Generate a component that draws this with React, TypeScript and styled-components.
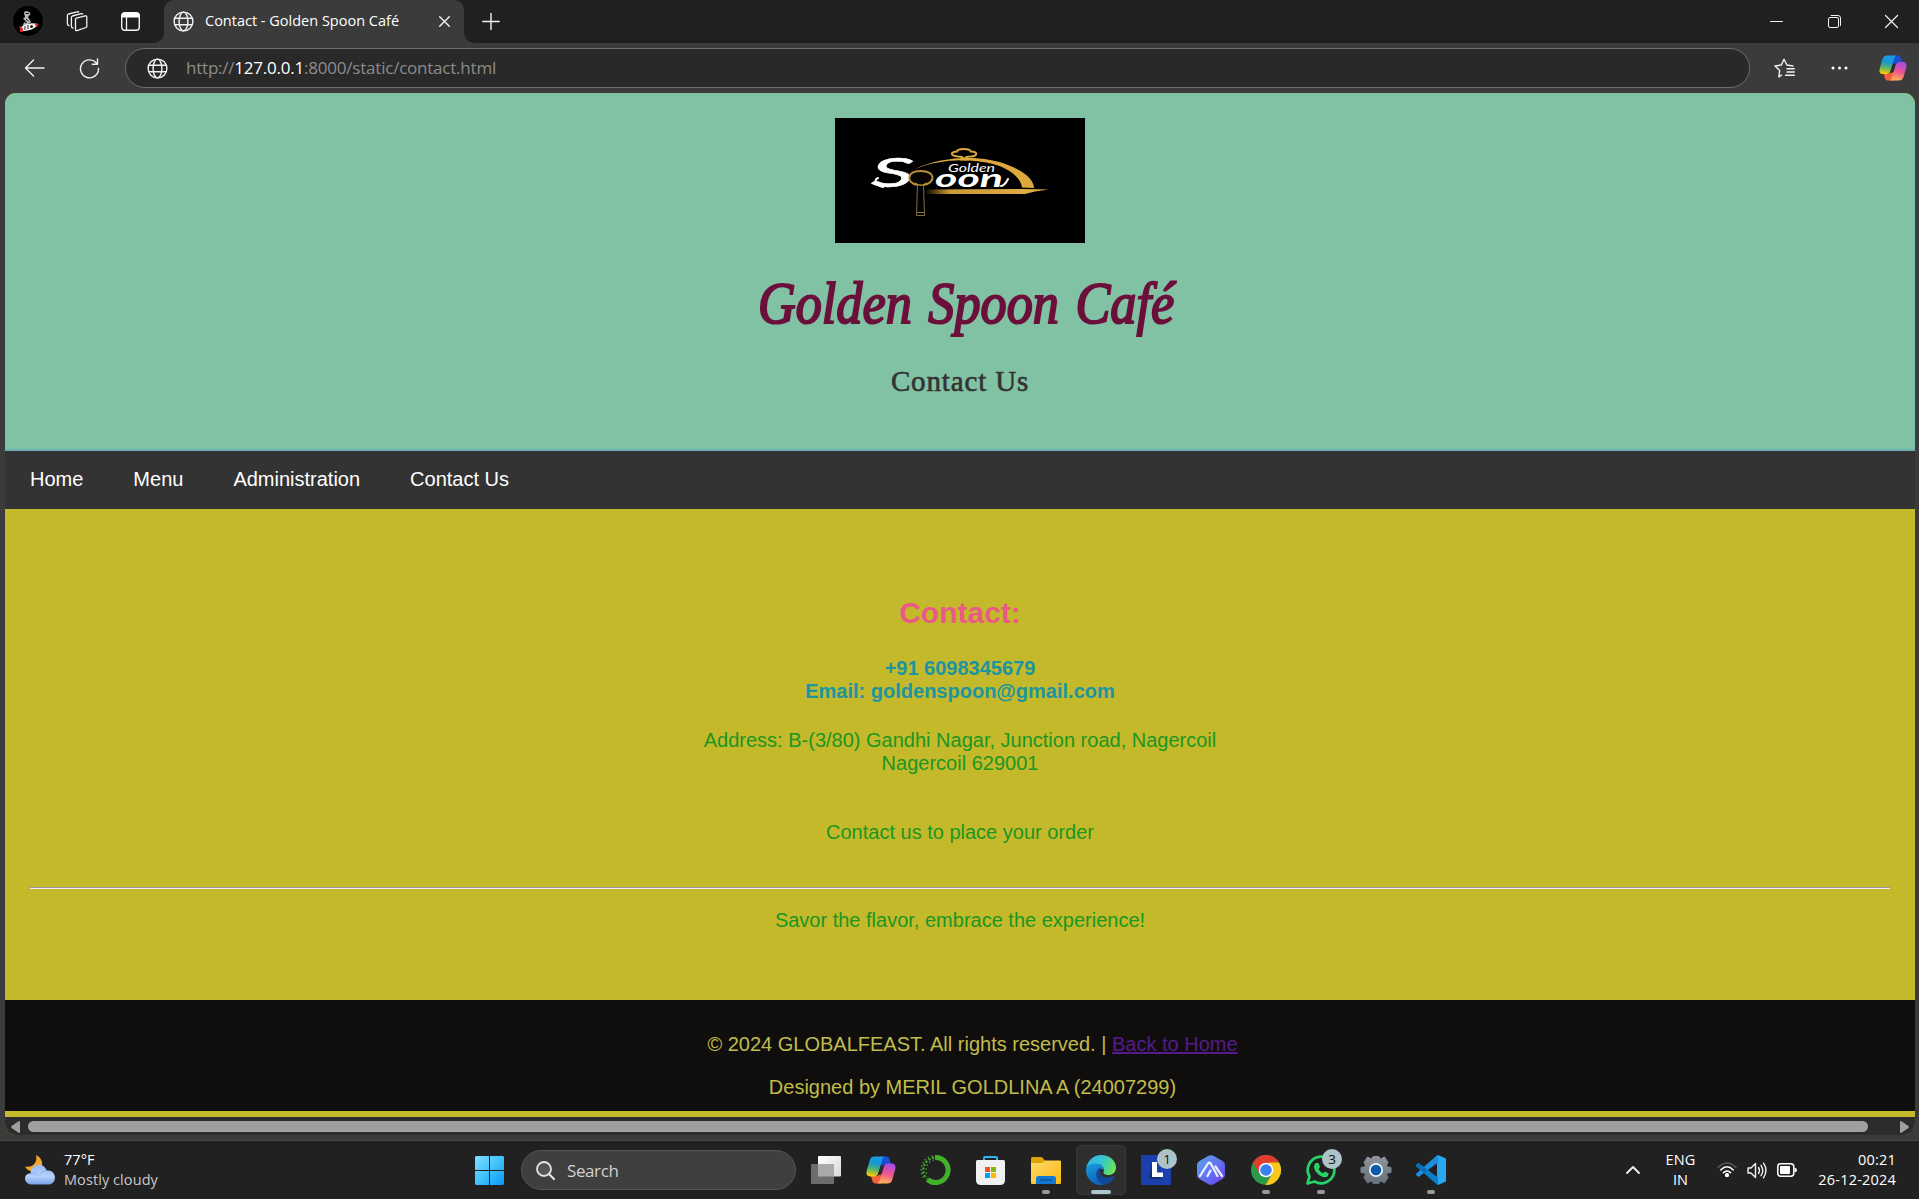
import React from "react";
import styled, { createGlobalStyle } from "styled-components";

const GlobalStyle = createGlobalStyle`
  * { box-sizing: border-box; }
  html, body { margin: 0; padding: 0; overflow: hidden; background: #202020; }
  svg { display: block; flex: none; overflow: visible; }
`;

const ui = `"Open Sans", "Noto Sans", sans-serif`;

const Screen = styled.div`
  width: 1919px;
  height: 1199px;
  display: flex;
  flex-direction: column;
  overflow: hidden;
  font-family: ${ui};
  color: #fff;
`;

const BrowserWindow = styled.div`
  height: 1141px;
  display: flex;
  flex-direction: column;
  background: #3b3b3b;
  border-bottom: 1px solid #474747;
`;

/* ---------- tab strip ---------- */
const TabStrip = styled.div`
  height: 43px;
  flex: none;
  display: flex;
  background: #202020;
`;
const StripIcons = styled.div`
  width: 164px;
  display: flex;
  align-items: center;
  padding: 0 0 1px 13px;
`;
const Cell = styled.div<{ $ml?: number; $mt?: number }>`
  margin-left: ${(p) => p.$ml ?? 0}px;
  margin-top: ${(p) => p.$mt ?? 0}px;
  display: flex;
`;
const Tab = styled.div`
  position: relative;
  width: 300px;
  height: 43px;
  display: flex;
  align-items: center;
  padding: 0 14px 0 9px;
  background: #3b3b3b;
  border-radius: 10px 10px 0 0;
  &::before,
  &::after {
    content: "";
    position: absolute;
    bottom: 0;
    width: 10px;
    height: 10px;
  }
  &::before {
    left: -10px;
    background: radial-gradient(circle at 0 0, transparent 9.5px, #3b3b3b 10px);
  }
  &::after {
    right: -10px;
    background: radial-gradient(circle at 100% 0, transparent 9.5px, #3b3b3b 10px);
  }
`;
const TabTitle = styled.span`
  margin-left: 11px;
  flex: 1;
  font-size: 14.5px;
  letter-spacing: 0;
  line-height: 20px;
  white-space: nowrap;
  padding-bottom: 1px;
`;
const WindowButtons = styled.div`
  margin-left: auto;
  display: flex;
  align-items: center;
  gap: 44.5px;
  padding-right: 21px;
`;

/* ---------- toolbar ---------- */
const Toolbar = styled.div`
  height: 50px;
  flex: none;
  display: flex;
  align-items: center;
  padding-left: 24px;
`;
const AddressBar = styled.div`
  margin-left: 25px;
  width: 1625px;
  height: 40px;
  display: flex;
  align-items: center;
  padding-left: 21px;
  border: 1px solid #6b6b6b;
  border-radius: 20px;
  background: #292929;
`;
const Url = styled.span`
  margin-left: 18px;
  font-size: 17px;
  letter-spacing: -0.22px;
  line-height: 24px;
  color: #8c8c8c;
  white-space: nowrap;
  b { font-weight: 400; color: #fff; }
`;

/* ---------- page ---------- */
const Viewport = styled.div`
  margin: 0 4px 0 5px;
  height: 1042px;
  display: flex;
  flex-direction: column;
  overflow: hidden;
  border-radius: 11px;
  background: #c4b92a;
  font-family: "Liberation Sans", Arial, sans-serif;
  font-size: 20px;
  line-height: 23px;
`;
const Header = styled.header`
  height: 358px;
  flex: none;
  display: flex;
  flex-direction: column;
  align-items: center;
  padding-top: 25px;
  background: #81c2a4;
  border-bottom: 2px solid #6cb0b8;
  font-family: "Liberation Serif", "Times New Roman", serif;
`;
const LogoBox = styled.div`
  width: 250px;
  height: 125px;
  background: #000;
`;
const SiteTitle = styled.h1`
  margin: 24px 0 0 12px;
  font-size: 59px;
  line-height: 72px;
  font-weight: 400;
  font-style: italic;
  color: #6b0f3b;
  -webkit-text-stroke: 2.1px #6b0f3b;
  word-spacing: 4px;
  transform: scaleX(0.885);
  white-space: nowrap;
`;
const SubTitle = styled.p`
  margin: 24px 0 0;
  font-size: 29px;
  line-height: 36px;
  letter-spacing: 0.85px;
  color: #333;
  -webkit-text-stroke: 0.6px #333;
`;
const Nav = styled.nav`
  height: 58px;
  flex: none;
  display: flex;
  align-items: center;
  gap: 50px;
  padding: 0 25px 1px;
  background: #333;
`;
const NavLink = styled.a`
  color: #fff;
`;
const Main = styled.main`
  height: 491px;
  flex: none;
  padding: 87px 25px 0;
  text-align: center;
  color: #1a9622;
`;
const ContactHeading = styled.h2`
  margin: 0;
  font-size: 30px;
  line-height: 34px;
  color: #e95a85;
`;
const Para = styled.p<{ $top: number; $strong?: boolean }>`
  margin: ${(p) => p.$top}px 0 0;
  ${(p) => p.$strong && "font-weight: 700; color: #1b95a0;"}
`;
const Rule = styled.hr`
  margin: 43px 0 0;
  height: 2px;
  border: 0;
  border-top: 1px solid #9a9a9a;
  background: #eee;
`;
const Footer = styled.footer`
  height: 111px;
  flex: none;
  padding: 33px 0 0 25px;
  text-align: center;
  background: #100e0c;
  color: #c0bc4c;
  p { margin: 0 0 20px; }
  a { color: #551a8b; text-decoration: underline; }
`;
const ScrollBar = styled.div`
  margin-top: 6px;
  height: 18px;
  flex: none;
  display: flex;
  align-items: center;
  padding: 1px 6px 0 6px;
  background: #2c2c2c;
`;
const Thumb = styled.div`
  margin: 0 32px 0 8px;
  flex: 1;
  height: 11px;
  border-radius: 6px;
  background: #9f9f9f;
`;

/* ---------- taskbar ---------- */
const Taskbar = styled.div`
  height: 58px;
  display: flex;
  align-items: center;
  background: #212121;
`;
const Weather = styled.div`
  width: 465px;
  display: flex;
  align-items: center;
  padding-left: 24px;
  gap: 8px;
`;
const Lines = styled.div<{ $align?: string; $muted?: boolean; $ls?: number }>`
  display: flex;
  flex-direction: column;
  text-align: ${(p) => p.$align ?? "left"};
  font-size: 14.5px;
  line-height: 20px;
  letter-spacing: ${(p) => p.$ls ?? 0.08}px;
  white-space: nowrap;
  padding-bottom: 1px;
  span:last-child { color: ${(p) => (p.$muted ? "#c8c8c8" : "#fff")}; }
`;
const AppTile = styled.div<{ $active?: boolean }>`
  position: relative;
  width: 50px;
  height: 50px;
  display: flex;
  align-items: center;
  justify-content: center;
  border-radius: 5px;
  border: 1px solid ${(p) => (p.$active ? "#393939" : "transparent")};
  background: ${(p) => (p.$active ? "#2e2e2e" : "transparent")};
`;
const Running = styled.i<{ $active?: boolean }>`
  position: absolute;
  bottom: 0;
  left: 50%;
  transform: translateX(-50%);
  width: ${(p) => (p.$active ? 20 : 8)}px;
  height: 4px;
  border-radius: 2px;
  background: ${(p) => (p.$active ? "#adc6cd" : "#9a9a9a")};
`;
const Badge = styled.b`
  position: absolute;
  left: 25px;
  top: 3px;
  width: 20px;
  height: 20px;
  border-radius: 50%;
  background: #adc3c9;
  color: #111;
  font-size: 13.5px;
  font-weight: 400;
  line-height: 20px;
  text-align: center;
`;
const Search = styled.div`
  width: 275px;
  height: 40px;
  margin: 0 5px 0 6px;
  display: flex;
  align-items: center;
  gap: 12px;
  padding-left: 14px;
  border: 1px solid #555;
  border-radius: 20px;
  background: #3f3f3f;
  color: #d0d0d0;
  font-size: 17px;
  letter-spacing: -0.4px;
`;
const Apps = styled.div`
  display: flex;
  gap: 5px;
`;
const Tray = styled.div`
  margin-left: auto;
  padding-right: 23px;
  display: flex;
  align-items: center;
`;

/* ---------- drawings ---------- */
const Globe = () => (
  <svg width="21" height="21" viewBox="0 0 21 21" fill="none" stroke="#f2f2f2" strokeWidth="1.4">
    <circle cx="10.5" cy="10.5" r="9.4" />
    <ellipse cx="10.5" cy="10.5" rx="4.4" ry="9.4" />
    <path d="M2 7.2H19M2 13.8H19" />
  </svg>
);

const Copilot = ({ size, id }: { size: number; id: string }) => (
  <svg width={size} height={size * 0.93} viewBox="0 0 30 28">
    <defs>
      <linearGradient id={id + "a"} x1="0.5" y1="0" x2="0.35" y2="1">
        <stop offset="0" stopColor="#1b9be8" />
        <stop offset=".35" stopColor="#1896d5" />
        <stop offset=".65" stopColor="#55b46b" />
        <stop offset="1" stopColor="#ffd000" />
      </linearGradient>
      <linearGradient id={id + "b"} x1="0.6" y1="0" x2="0.4" y2="1">
        <stop offset="0" stopColor="#a24ce8" />
        <stop offset=".5" stopColor="#ee5392" />
        <stop offset="1" stopColor="#ffb357" />
      </linearGradient>
    </defs>
    <path d="M15 .5H20.5C22.8 .5 23.3 2 24 4.2L25.2 8H20C17.5 8 17 9.500 16.3 12L14 9Z" fill="#1a4ed0" />
    <path d="M15 27.5H9.5C7.2 27.5 6.7 26 6 23.8L4.800 20H10C12.5 20 13 18.5 13.7 16L16 19Z" fill="#f4603a" />
    <path d="M8.500 .5H19C17.300 .8 16.700 2.200 16.100 4.200L12.300 16.800C11.500 19.400 10.300 20.500 8 20.500H4.200C1 20.500 -.2 18.200 .7 14.800L3.600 4.500C4.300 2 5.800 .5 8.500 .5Z" fill={`url(#${id}a)`} />
    <path d="M21.500 27.500H11C12.700 27.200 13.300 25.800 13.900 23.800L17.700 11.200C18.500 8.600 19.700 7.500 22 7.500H25.800C29 7.500 30.200 9.800 29.300 13.200L26.400 23.500C25.700 26 24.200 27.500 21.500 27.500Z" fill={`url(#${id}b)`} />
    <path d="M16.600 9.500C15.800 11.500 14.200 17 13.300 19" stroke="#2b2b2b" strokeWidth="2.400" fill="none" />
  </svg>
);

const SpoonLogo = () => (
  <svg width="250" height="125" viewBox="0 0 250 125">
    <defs>
      <linearGradient id="gold" x1="0" x2="1">
        <stop offset="0" stopColor="#dba83c" stopOpacity="0" />
        <stop offset=".2" stopColor="#c99a35" />
        <stop offset="1" stopColor="#e3b049" />
      </linearGradient>
    </defs>
    <path d="M80 51C112 36 152 38 173 47C192 54 199 63 199 70L187 69.5C186 60 174 50 158 46C132 40 106 41 80 51Z" fill="#dda83c" />
    <path d="M90 71.5L188 71L213.5 71.5L200 73.5L190 76H90Z" fill="url(#gold)" />
    <path d="M125 41.500C131 40.500 127 38.5 123 38.500C115 37.500 115 34 122 33.500C122 30 135 30 136 33.500C144 34 142 38 136 38.500C131 38.500 127 40.500 134 41.500Z" fill="none" stroke="#dda83c" strokeWidth="2" />
    <g fontFamily="Lato, sans-serif" fontStyle="italic" fill="#fff">
      <text x="36" y="69" fontSize="40" textLength="43" lengthAdjust="spacingAndGlyphs" fontWeight="400" stroke="#fff" strokeWidth=".6">S</text>
      <text x="100" y="69" fontSize="25" textLength="68" lengthAdjust="spacingAndGlyphs" fontWeight="700">oon</text>
      <text x="113" y="53.500" fontSize="11.500" textLength="47" lengthAdjust="spacingAndGlyphs">Golden</text>
    </g>
    <path d="M43 60C38 62 41 68 48 69M166 68C169 68 171 65 173 61" fill="none" stroke="#fff" strokeWidth="2" strokeLinecap="round" />
    <g fill="none" stroke="#b98f3a">
      <path d="M82.5 67C71 65 71 53 86 53C101 53 101 65 88.500 67" strokeWidth="2" fill="#080602" />
      <path d="M80 65C83 68 89 68 92 65" strokeWidth="1.3" />
      <path d="M82.500 67L81.500 97.500H89.500L88.500 67M81.500 94.500H89.500" strokeWidth=".9" stroke="#927848" />
    </g>
  </svg>
);

const Avatar = () => (
  <svg width="30" height="30" viewBox="0 0 30 30">
    <circle cx="15" cy="15" r="15" fill="#000" />
    <path d="M11 7C11 4.500 17 4.500 17.500 8L15 11L18 16L15 18L11 20L10 18L13 15L10 13L12 11Z" fill="#bbb" />
    <path d="M12.500 7.500H16M13 13L15.500 15M12 17L14 16" stroke="#111" strokeWidth="1" />
    <path d="M8 21C13 17 20 16.500 25 18C22 23 16 25 10 25Z" fill="#f5f5f5" />
    <path d="M21.500 17.300L25.800 18L23.500 21.500ZM6.500 20L9.500 22L10 26H7Z" fill="#e0242b" />
    <circle cx="18.500" cy="20.500" r="1.500" fill="#222" />
    <path d="M12 20V24M15 19V23" stroke="#222" />
  </svg>
);

const Workspaces = () => (
  <svg width="22" height="21" viewBox="0 0 22 21" fill="none" stroke="#f0f0f0" strokeWidth="1.300" strokeLinejoin="round">
    <path d="M9.500 8.500Q9.500 7.500 10.400 7.200L19.300 4.800Q20.800 4.500 20.800 6V15.200Q20.800 16.200 19.900 16.500L11 19.600Q9.500 19.900 9.500 18.500Z" />
    <path d="M7.500 17.200L6.500 16.800Q5.400 16.400 5.400 15.200V6.600Q5.400 5.400 6.500 5L15.200 2.600Q16.500 2.300 17 3.400" />
    <path d="M3.500 14.800L2.500 14.400Q1.400 14 1.400 12.800V4.600Q1.400 3.400 2.500 3L11.200 .8Q12.500 .5 13 1.400" />
  </svg>
);

const TabActions = () => (
  <svg width="19" height="19" viewBox="0 0 19 19">
    <rect x=".7" y=".7" width="17.600" height="17.600" rx="3" fill="none" stroke="#f5f5f5" strokeWidth="1.400" />
    <path d="M.7 3.500Q.7 .7 3.500 .7H15.500Q18.300 .7 18.300 3.500V5.500H.7Z" fill="#fff" />
    <path d="M5.500 5V18" stroke="#f5f5f5" strokeWidth="1.300" />
  </svg>
);

const Line = ({ w, h, d, sw = 1.4 }: { w: number; h: number; d: string; sw?: number }) => (
  <svg width={w} height={h} viewBox={`0 0 ${w} ${h}`} fill="none" stroke="#f2f2f2" strokeWidth={sw} strokeLinecap="round" strokeLinejoin="round">
    <path d={d} />
  </svg>
);

const CloudMoon = () => (
  <svg width="32" height="30" viewBox="0 0 32 30">
    <defs>
      <linearGradient id="cl" x1="0" y1="0" x2="0" y2="1">
        <stop offset="0" stopColor="#9db9f4" />
        <stop offset=".6" stopColor="#b2d0fb" />
        <stop offset="1" stopColor="#7b9fea" />
      </linearGradient>
    </defs>
    <path d="M12 0C17 2 20 8 17 13C14 18 4 18 1 11.500C8 13 14 8 12 0Z" fill="#f3a72b" />
    <path d="M8 29.500C-1 29.500 -1 18 6.500 18.500C7 8 20 7 22.500 15.500C33 14 34 29.500 24 29.500Z" fill="url(#cl)" />
    <path d="M6.500 18.500Q12 17 14 20.500M22.500 15.500Q18 16 16 19" stroke="#7fa1e6" strokeWidth="1" fill="none" opacity=".6" />
  </svg>
);

const Windows = () => (
  <svg width="30" height="30" viewBox="0 0 30 30">
    <defs>
      <linearGradient id="win" x1="0" y1="0" x2="29" y2="29" gradientUnits="userSpaceOnUse">
        <stop offset="0" stopColor="#84dcff" />
        <stop offset=".5" stopColor="#44c4fb" />
        <stop offset="1" stopColor="#0a98f8" />
      </linearGradient>
    </defs>
    <path d="M1 1H14V15H0V2ZM15 1H28L29 2V15H15ZM0 16H14V30H1L0 29ZM15 16H29V29L28 30H15Z" fill="url(#win)" />
  </svg>
);

const TaskView = () => (
  <svg width="30" height="28" viewBox="0 0 30 28">
    <defs>
      <linearGradient id="tv" x1="0" y1="0" x2="1" y2="1">
        <stop offset="0" stopColor="#fff" />
        <stop offset="1" stopColor="#d9d9d9" />
      </linearGradient>
    </defs>
    <rect x="7" y="0" width="23" height="20.500" rx="1" fill="url(#tv)" />
    <rect x="0" y="8" width="23" height="20" rx="1" fill="#6d6d6d" />
    <path d="M7 8H23V20.500H7Z" fill="#a9a9a9" />
  </svg>
);

const Anaconda = () => (
  <svg width="30" height="30" viewBox="0 0 30 30" fill="none" stroke="#43b02a">
    <path d="M14 2.500A12.500 12.500 0 1 1 6.500 24.500" strokeWidth="5" />
    <path d="M13 2.700A12.500 12.500 0 0 0 6 24" strokeWidth="2.200" strokeDasharray="2 1.800" />
    <path d="M11.500 .8A14.400 14.400 0 0 0 3.500 24" strokeWidth="1.300" strokeDasharray="1.500 2.200" />
    <path d="M13 5A10.500 10.500 0 0 0 7 21.500" strokeWidth="1.200" strokeDasharray="1.500 2.500" />
  </svg>
);

const Store = () => (
  <svg width="30" height="30" viewBox="0 0 30 30">
    <path d="M8 6V3Q8 2 9 2H20Q21 2 21 3V6" fill="none" stroke="#2fb6ea" strokeWidth="2" />
    <path d="M1.500 5H27.500Q29 5 29 6.500V25Q29 30 24 30H5Q0 30 0 25V6.500Q0 5 1.500 5Z" fill="#f1f1f1" />
    <path d="M9 12H14V17H9Z" fill="#f25022" />
    <path d="M15 12H20V17H15Z" fill="#7fba00" />
    <path d="M9 18H14V23H9Z" fill="#00a4ef" />
    <path d="M15 18H20V23H15Z" fill="#ffb900" />
  </svg>
);

const Explorer = () => (
  <svg width="30" height="27" viewBox="0 0 30 27">
    <defs>
      <linearGradient id="fo" x1="0" y1="0" x2="1" y2="1">
        <stop offset="0" stopColor="#ffdb69" />
        <stop offset="1" stopColor="#fdb713" />
      </linearGradient>
    </defs>
    <path d="M0 1.500Q0 0 1.500 0H9.500Q11 0 12 1.200L14 3.500V8H0Z" fill="#e0a106" />
    <path d="M0 6H10Q11.500 6 12.500 5L14 3.500H29Q30 3.500 30 4.500V26Q30 27 29 27H1Q0 27 0 26Z" fill="url(#fo)" />
    <path d="M5 27V21.500Q5 19 7.500 19H22.500Q25 19 25 21.500V27Z" fill="#1379d0" />
    <path d="M9 23H21" stroke="#0a4f95" strokeWidth="1.300" />
  </svg>
);

const Edge = () => (
  <svg width="30" height="30" viewBox="0 0 30 30">
    <defs>
      <linearGradient id="e1" x1="0" y1="0.300" x2="1" y2="0.600">
        <stop offset="0" stopColor="#2fb4e8" />
        <stop offset=".5" stopColor="#35c6cf" />
        <stop offset="1" stopColor="#6de84e" />
      </linearGradient>
      <linearGradient id="e2" x1="0" y1="0" x2=".4" y2="1">
        <stop offset="0" stopColor="#1b9de2" />
        <stop offset="1" stopColor="#0c63b9" />
      </linearGradient>
    </defs>
    <path d="M.3 13.500C1.300 5.500 7.500 0 15 0C24 0 30 6 30 12.500C30 18 26 20 22.500 20C19.500 20 17 18.700 17.500 17.500C18.500 16 18.500 10 11.500 9C6.500 8.300 2 11 .3 13.500Z" fill="url(#e1)" />
    <path d="M0 15C0 10.500 4.500 8.300 9.500 8.500C15.500 8.800 18.500 13 18.200 15.500C16 12.500 10.500 14 10.500 19.500C10.500 24.500 14.500 29 19.500 29.200C10 32.500 0 25.500 0 15Z" fill="url(#e2)" />
    <path d="M10.500 18.500C10.500 15 12.500 13 15 12.800C12 17 15 22.500 20.500 22.800C24 23 26 21.500 27.500 21C28.500 21 28.700 21.500 28.200 22.500C25.500 27 22 29.500 18.500 29.300C13.500 28.500 10.500 23.500 10.500 18.500Z" fill="#12489c" />
  </svg>
);

const LApp = () => (
  <svg width="30" height="30" viewBox="0 0 30 30">
    <rect width="30" height="30" fill="#1d3fae" />
    <path d="M11 8L8 24H22L17 21Z" fill="#12306f" />
    <path d="M11 7H16V17.500H22V22H11Z" fill="#fff" />
  </svg>
);

const HexApp = () => (
  <svg width="28" height="30" viewBox="0 0 28 30">
    <defs>
      <linearGradient id="hx" x1="0" y1="0" x2="1" y2="1">
        <stop offset="0" stopColor="#5aaaf0" />
        <stop offset="1" stopColor="#6b3df0" />
      </linearGradient>
    </defs>
    <path d="M11.500 .8Q14 -.5 16.500 .8L25.500 6Q28 7.500 28 10V20Q28 22.500 25.500 24L16.500 29.200Q14 30.500 11.500 29.200L2.500 24Q0 22.500 0 20V10Q0 7.500 2.500 6Z" fill="url(#hx)" />
    <path d="M3 21L11 8.500Q12.500 6.500 14 9L20.500 21M10.500 21L13.500 15.500M18.500 11.500L25 21" fill="none" stroke="#e9efff" strokeWidth="2.300" strokeLinecap="round" />
  </svg>
);

const Chrome = () => (
  <svg width="30" height="30" viewBox="0 0 30 30">
    <circle cx="15" cy="15" r="15" fill="#2b9b49" />
    <path d="M2 7.500A15 15 0 0 1 28 7.500L15 8L8.500 18.700Z" fill="#e33b2e" />
    <path d="M28 7.500A15 15 0 0 1 14.500 30L21.500 18.500L18 7.500Z" fill="#fcc61e" />
    <circle cx="15" cy="15" r="7.300" fill="#fff" />
    <circle cx="15" cy="15" r="5.800" fill="#3d7ff0" />
  </svg>
);

const WhatsApp = () => (
  <svg width="30" height="30" viewBox="0 0 30 30">
    <path d="M1.500 28.500L3.500 21.500A13.300 13.300 0 1 1 8.500 26.500Z" fill="none" stroke="#27d366" strokeWidth="2.700" strokeLinejoin="round" />
    <path d="M10 8L12.500 8L14 12L12.500 14Q14 17 17 18.300L18.800 16.500L22.500 18.200Q22.500 22 19 22.300C14 22 8 16.500 8 11.500Q8 9 10 8Z" fill="#27d366" />
  </svg>
);

const Settings = () => (
  <svg width="30" height="28" viewBox="0 0 30 28">
    <defs>
      <linearGradient id="gr" x1="0" y1="0" x2="0" y2="1">
        <stop offset="0" stopColor="#8d949c" />
        <stop offset="1" stopColor="#66707b" />
      </linearGradient>
    </defs>
    <path
      d="M6.500 1L10.500 3L12.300 .5H17.700L19.500 3L23.500 1L27 6.500L25 10.500L30 11.500V16.500L25 17.500L27 21.500L23.500 27L19.500 25L17.700 27.500H12.300L10.500 25L6.500 27L3 21.500L5 17.500L0 16.500V11.500L5 10.500L3 6.500Z"
      fill="url(#gr)"
      stroke="url(#gr)"
      strokeLinejoin="round"
    />
    <circle cx="15" cy="14" r="7" fill="#f1f3f5" />
    <circle cx="15" cy="14" r="5.300" fill="#0b5cad" />
  </svg>
);

const VSCode = () => (
  <svg width="30" height="30" viewBox="0 0 30 30">
    <path d="M22 0L30 3.500V26.500L22 30L21 22V8Z" fill="#29a7f2" />
    <path d="M0 10L2.500 8L22 22.500V30L20.500 29.300L.3 11.500Z" fill="#0a7dcc" />
    <path d="M0 20L2.500 22L22 7.500V0L20.500 .7L.3 18.500Z" fill="#1b8fdd" />
    <path d="M0 10L2.500 8L12 15L8.500 18.500Z" fill="#0a6db5" />
  </svg>
);

const apps: { icon: React.ReactNode; running?: boolean; active?: boolean; badge?: string }[] = [
  { icon: <TaskView /> },
  { icon: <Copilot size={30} id="tb" /> },
  { icon: <Anaconda /> },
  { icon: <Store /> },
  { icon: <Explorer />, running: true },
  { icon: <Edge />, running: true, active: true },
  { icon: <LApp />, badge: "1" },
  { icon: <HexApp /> },
  { icon: <Chrome />, running: true },
  { icon: <WhatsApp />, running: true, badge: "3" },
  { icon: <Settings /> },
  { icon: <VSCode />, running: true },
];

export default function App() {
  return (
    <Screen>
      <GlobalStyle />
      <BrowserWindow>
        <TabStrip>
          <StripIcons>
            <Avatar />
            <Cell $ml={23}><Workspaces /></Cell>
            <Cell $ml={33}><TabActions /></Cell>
          </StripIcons>
          <Tab>
            <Globe />
            <TabTitle>Contact - Golden Spoon Café</TabTitle>
            <Line w={11} h={11} d="M.7 .7L10.300 10.300M10.300 .7L.7 10.300" />
          </Tab>
          <Cell $ml={18} $mt={13}><Line w={18} h={17} d="M9 .5V16.500M.8 8.500H17.200" /></Cell>
          <WindowButtons>
            <Line w={13} h={13} d="M.5 6.500H12.500" sw={1} />
            <Line w={13} h={13} d="M2 2.500H9Q10.500 2.500 10.500 4V11Q10.500 12.500 9 12.500H2Q.5 12.500 .5 11V4Q.5 2.500 2 2.500ZM3 .5H10Q12.500 .5 12.500 3V10.500" sw={1} />
            <Line w={13} h={13} d="M.5 .5L12.500 12.500M12.500 .5L.5 12.500" sw={1.2} />
          </WindowButtons>
        </TabStrip>
        <Toolbar>
          <Line w={21} h={18} d="M20 9H1.500M9.500 1L1.500 9L9.500 17" />
          <Cell $ml={34}><Line w={21} h={21} d="M17.500 5.200A9 9 0 1 0 19.500 10.500M18.500 1V6.200H13.300" /></Cell>
          <AddressBar>
            <Globe />
            <Url>http://<b>127.0.0.1</b>:8000/static/contact.html</Url>
          </AddressBar>
          <Cell $ml={24}>
            <Line w={21} h={20} d="M7.500 17.200L4.800 18.800L5.700 12.500L1 8L7.300 7L10 1.200L12.900 7L19 8M13 10.700H20.300M13 14H20.300M11.500 17.200H20.300" />
          </Cell>
          <Cell $ml={36}>
            <svg width="17" height="4" viewBox="0 0 17 4" fill="#fff">
              <circle cx="2" cy="2" r="1.500" /><circle cx="8.500" cy="2" r="1.500" /><circle cx="15" cy="2" r="1.500" />
            </svg>
          </Cell>
          <Cell $ml={31}><Copilot size={28} id="bar" /></Cell>
        </Toolbar>

        <Viewport>
          <Header>
            <LogoBox><SpoonLogo /></LogoBox>
            <SiteTitle>Golden Spoon Café</SiteTitle>
            <SubTitle>Contact Us</SubTitle>
          </Header>
          <Nav>
            <NavLink>Home</NavLink>
            <NavLink>Menu</NavLink>
            <NavLink>Administration</NavLink>
            <NavLink>Contact Us</NavLink>
          </Nav>
          <Main>
            <ContactHeading>Contact:</ContactHeading>
            <Para $top={27} $strong>+91 6098345679<br />Email: goldenspoon@gmail.com</Para>
            <Para $top={26}>Address: B-(3/80) Gandhi Nagar, Junction road, Nagercoil<br />Nagercoil 629001</Para>
            <Para $top={46}>Contact us to place your order</Para>
            <Rule />
            <Para $top={20}>Savor the flavor, embrace the experience!</Para>
          </Main>
          <Footer>
            <p>© 2024 GLOBALFEAST. All rights reserved. | <a>Back to Home</a></p>
            <p>Designed by MERIL GOLDLINA A (24007299)</p>
          </Footer>
          <ScrollBar>
            <svg width="9" height="12" viewBox="0 0 9 12"><path d="M9 1V11Q9 12 8 12L0.500 7Q0 6 .5 5L8 0Q9 0 9 1Z" fill="#a0a0a0" /></svg>
            <Thumb />
            <svg width="9" height="12" viewBox="0 0 9 12"><path d="M0 1V11Q0 12 1 12L8.500 7Q9 6 8.500 5L1 0Q0 0 0 1Z" fill="#a0a0a0" /></svg>
          </ScrollBar>
        </Viewport>
      </BrowserWindow>

      <Taskbar>
        <Weather>
          <CloudMoon />
          <Lines $muted><span>77°F</span><span>Mostly cloudy</span></Lines>
        </Weather>
        <AppTile><Windows /></AppTile>
        <Search>
          <svg width="19" height="19" viewBox="0 0 19 19" fill="none" stroke="#e4e4e4">
            <circle cx="8" cy="8" r="7" strokeWidth="1.800" fill="#555" />
            <path d="M13 13L18 18" strokeWidth="2.200" strokeLinecap="round" />
          </svg>
          <span>Search</span>
        </Search>
        <Apps>
          {apps.map((a, i) => (
            <AppTile key={i} $active={a.active}>
              {a.icon}
              {a.badge && <Badge>{a.badge}</Badge>}
              {a.running && <Running $active={a.active} />}
            </AppTile>
          ))}
        </Apps>
        <Tray>
          <Line w={14} h={8} d="M1 7L7 1L13 7" sw={1.8} />
          <Cell $ml={26}><Lines $align="center"><span>ENG</span><span>IN</span></Lines></Cell>
          <Cell $ml={22}>
            <svg width="20" height="16" viewBox="0 0 20 16" fill="none" stroke="#fff" strokeWidth="1.500" strokeLinecap="round">
              <path d="M1 5.500Q10 -3.500 19 5.500" stroke="#5a5a5a" />
              <path d="M3.700 8Q10 1.500 16.300 8M6.300 10.800Q10 7 13.700 10.800" />
              <circle cx="10" cy="13.200" r="1.400" fill="#fff" />
            </svg>
          </Cell>
          <Cell $ml={10}>
            <Line w={20} h={17} d="M1 6V11H4L8.500 15.500V1.500L4 6ZM11.500 5.500Q13.500 8.500 11.500 11.500M14 3.300Q17.500 8.500 14 13.700M16.500 1.200Q21.500 8.500 16.500 15.800" />
          </Cell>
          <Cell $ml={10}>
            <svg width="20" height="14" viewBox="0 0 20 14">
              <rect x=".8" y=".8" width="16" height="12.400" rx="3" fill="none" stroke="#fff" strokeWidth="1.500" />
              <rect x="3" y="3" width="10" height="8" rx="1" fill="#fff" />
              <path d="M17.500 4.500Q20 5 20 7T17.500 9.500Z" fill="#fff" />
            </svg>
          </Cell>
          <Cell $ml={21}><Lines $align="right" $ls={0.2}><span>00:21</span><span>26-12-2024</span></Lines></Cell>
        </Tray>
      </Taskbar>
    </Screen>
  );
}
